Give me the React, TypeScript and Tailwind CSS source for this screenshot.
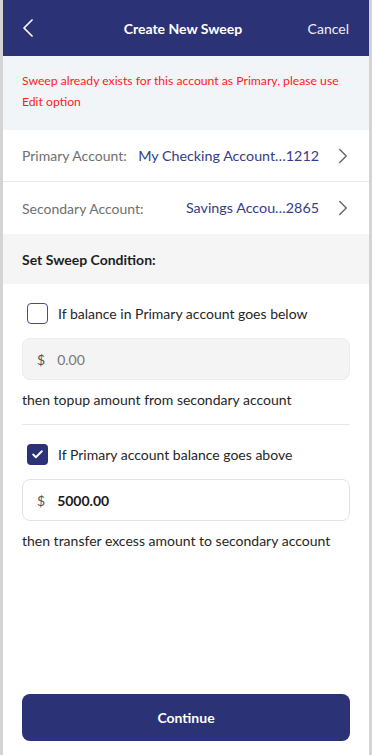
import { Check, ChevronLeft, ChevronRight } from 'lucide-react';

const font = { fontFamily: '"Lato", "Noto Sans", sans-serif' };

const AccountRow = ({ label, value, last }: { label: string; value: string; last?: boolean }) => (
    <div className={`flex items-center h-[52px] pl-[19px] pr-[17px] bg-white ${last ? '' : 'border-b border-[#e6e8ef]'}`}>
        <span className="text-[14px] text-[#6f6f6f]">{label}</span>
        <span className="flex-1 text-right text-[14.3px] text-[#363c86] pr-[11px]">{value}</span>
        <ChevronRight size={26} strokeWidth={1.4} className="text-[#6b6b6b] -mr-[4px]" />
    </div>
);

const Condition = ({
    checked,
    label,
    amount,
    note,
}: {
    checked: boolean;
    label: string;
    amount: string;
    note: string;
}) => (
    <div>
        <div className="flex items-center gap-[10px] pl-[5px]">
            <div
                className={`w-[21px] h-[21px] rounded-[4px] flex items-center justify-center ${
                    checked ? 'bg-[#2b3275]' : 'border-[1.5px] border-[#474d8c] bg-white'
                }`}
            >
                {checked && <Check size={13} strokeWidth={3.5} className="text-white" />}
            </div>
            <span className="text-[14px] text-[#262626]">{label}</span>
        </div>
        <div
            className={`mt-[14px] h-[42px] rounded-[8px] border flex items-center pl-[14px] gap-[12px] ${
                checked ? 'bg-white border-[#e3e3e3]' : 'bg-[#f4f4f4] border-[#ececec]'
            }`}
        >
            <span className="text-[14px] text-[#555]">$</span>
            <span className={`text-[14px] ${checked ? 'font-bold text-[#1a1a1a]' : 'text-[#777]'}`}>{amount}</span>
        </div>
        <p className="mt-[9px] text-[14px] text-[#262626]">{note}</p>
    </div>
);

export default function App() {
    return (
        <div style={font} className="w-[372px] h-[755px] bg-[#d4d4d4] px-[3px] flex">
            <div className="flex-1 flex flex-col bg-white">
                {/* Header */}
                <div className="h-[56px] bg-[#2b3275] flex items-center pl-[9px] pr-[20px] relative">
                    <ChevronLeft size={32} strokeWidth={1.3} className="text-white" />
                    <span className="absolute left-0 right-0 text-center text-[14px] font-bold text-white pointer-events-none -translate-x-[3px]">
                        Create New Sweep
                    </span>
                    <span className="ml-auto text-[14px] text-[#eef0f8]">Cancel</span>
                </div>

                {/* Error banner */}
                <div className="h-[74px] bg-[#f2f5f8] px-[19px] pt-[14px] text-[12.2px] leading-[21px] text-[#ff1b1b]">
                    Sweep already exists for this account as Primary, please use Edit option
                </div>

                <AccountRow label="Primary Account:" value="My Checking Account…1212" />
                <AccountRow label="Secondary Account:" value="Savings Accou…2865" last />

                {/* Section header */}
                <div className="h-[50px] bg-[#f5f5f5] flex items-center px-[19px] text-[14px] font-bold text-[#1f1f1f]">
                    Set Sweep Condition:
                </div>

                <div className="px-[19px] pt-[19px]">
                    <Condition
                        checked={false}
                        label="If balance in Primary account goes below"
                        amount="0.00"
                        note="then topup amount from secondary account"
                    />
                    <div className="mt-[14px] mb-[19px] border-t border-[#e8e8e8]" />
                    <Condition
                        checked
                        label="If Primary account balance goes above"
                        amount="5000.00"
                        note="then transfer excess amount to secondary account"
                    />
                </div>

                <div className="mt-auto px-[19px] pb-[14px]">
                    <button className="w-full h-[47px] rounded-[8px] bg-[#2b3275] text-white text-[14px] font-bold">
                        Continue
                    </button>
                </div>
            </div>
        </div>
    );
}
